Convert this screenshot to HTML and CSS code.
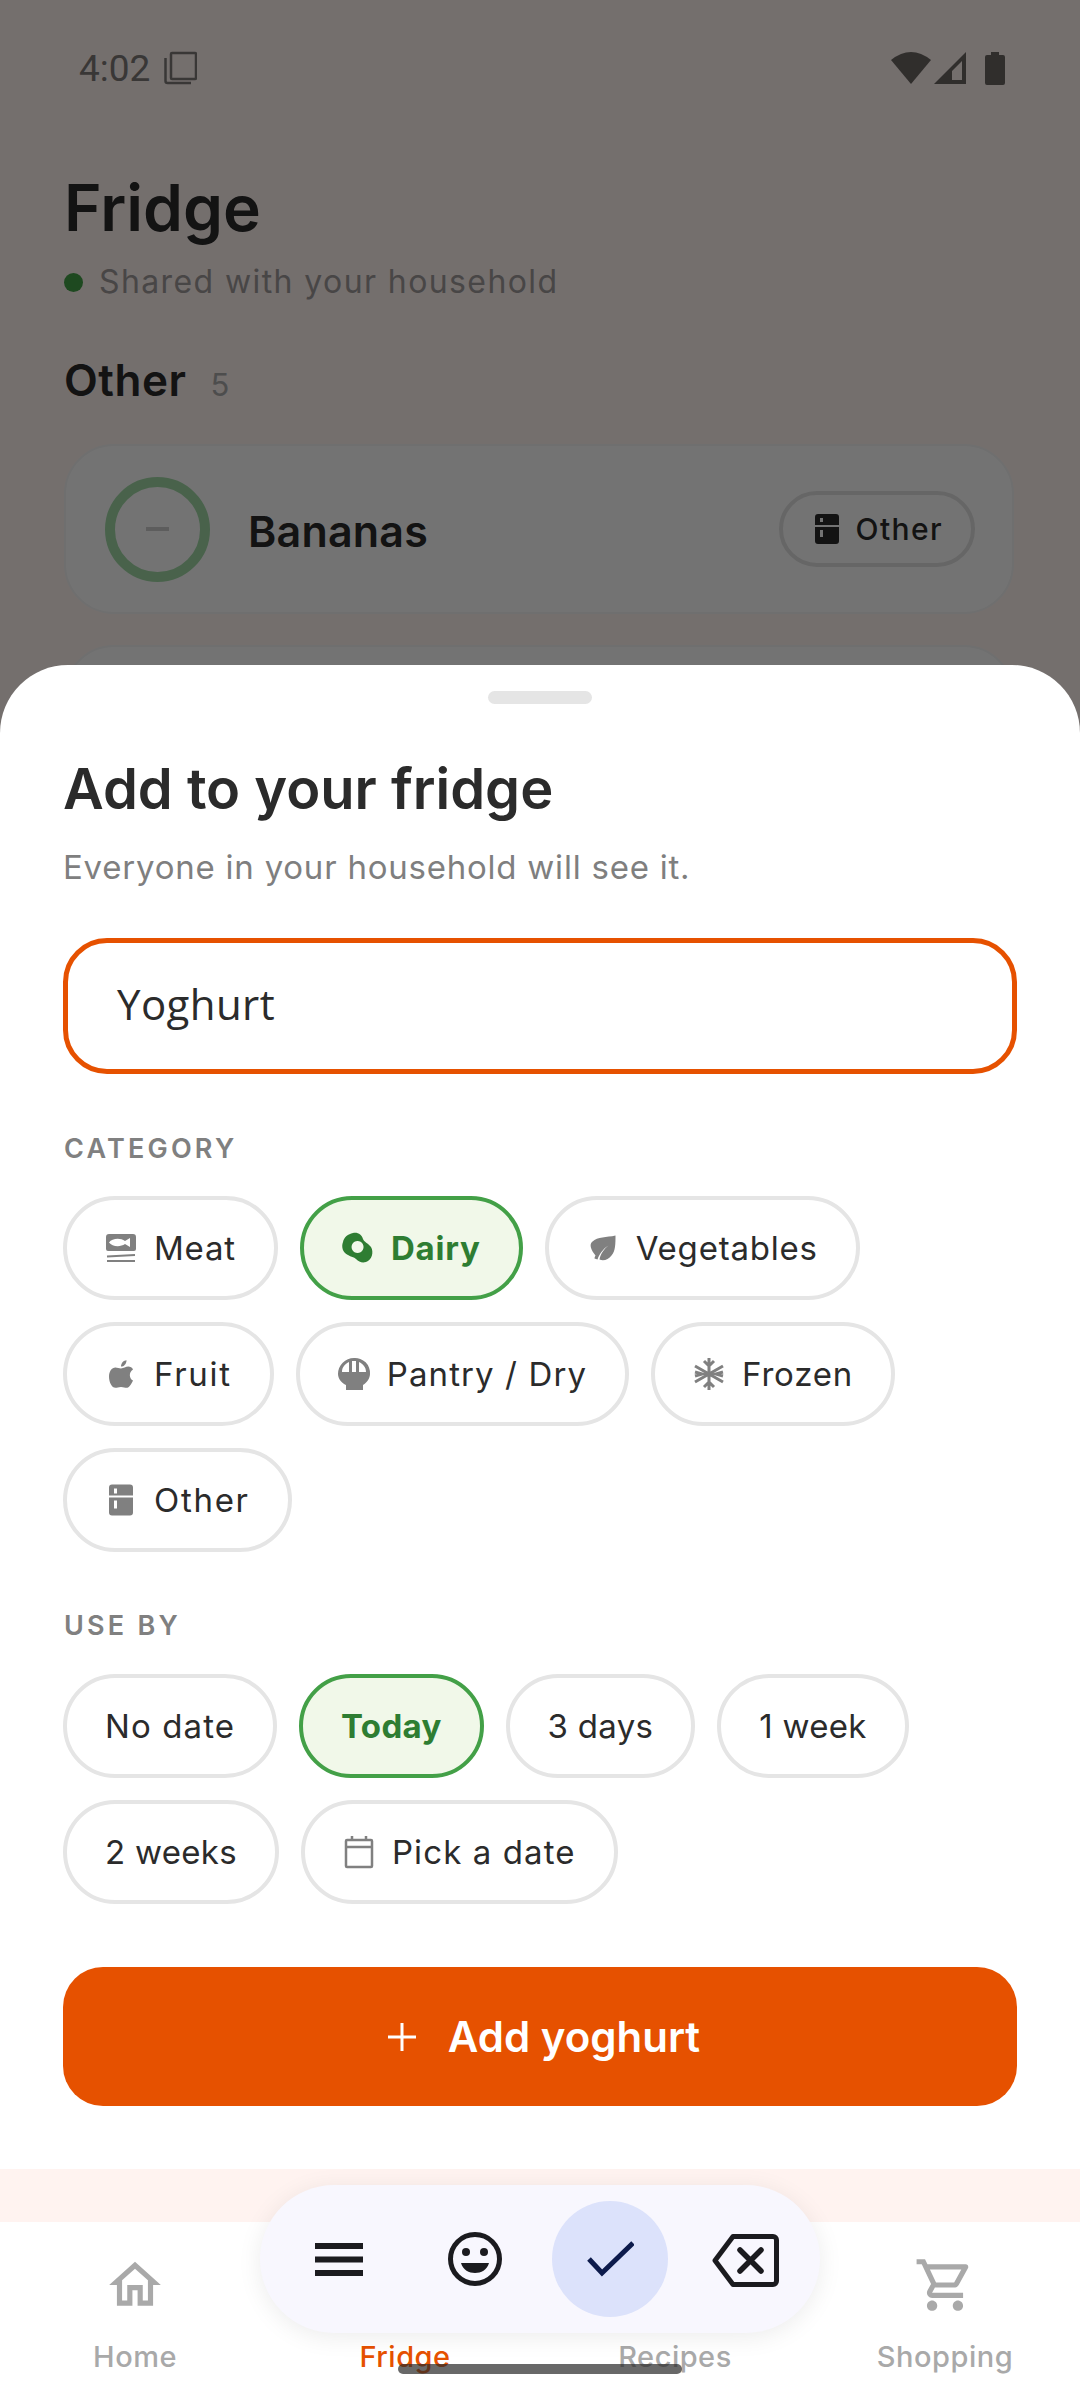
FILE: index.html
```html
<!DOCTYPE html>
<html lang="en">
<head>
  <meta charset="UTF-8">
  <meta name="viewport" content="width=device-width, initial-scale=1.0">
  <title>Fridge</title>
  <link rel="stylesheet" href="styles.css">
</head>
<body>
  <div class="screen">
    <div class="backdrop">
      <div class="status-bar">
        <div class="status-left">
          <span class="clock">4:02</span>
          <svg class="status-copy" viewBox="0 0 33 34"><path d="M8 2h23a1 1 0 0 1 1 1v24a1 1 0 0 1-1 1H8a1 1 0 0 1-1-1V3a1 1 0 0 1 1-1zM1.500 7v23a2 2 0 0 0 2 2H27" fill="none" stroke="currentColor" stroke-width="2.500"/></svg>
        </div>
        <div class="status-right">
          <svg class="status-wifi" viewBox="0 0 40 32"><path d="M20 32 0 8Q20-8 40 8z" fill="currentColor"/></svg>
          <svg class="status-signal" viewBox="0 0 32 32"><path d="M32 0v32H0zM28 9 18 19v9h10z" fill="currentColor" fill-rule="evenodd"/></svg>
          <svg class="status-battery" viewBox="0 0 20 33"><path d="M6 0h8v3h4a2 2 0 0 1 2 2v26a2 2 0 0 1-2 2H2a2 2 0 0 1-2-2V5a2 2 0 0 1 2-2h4z" fill="currentColor"/></svg>
        </div>
      </div>
      <h1 class="page-title">Fridge</h1>
      <div class="shared"><span class="shared-dot"></span>Shared with your household</div>
      <div class="section-head"><span class="section-name">Other</span><span class="section-count">5</span></div>
      <div class="item-card">
        <div class="ring"><span class="ring-dash"></span></div>
        <span class="item-name">Bananas</span>
        <span class="item-tag">
          <svg class="item-tag-icon" viewBox="0 0 24 30"><path d="M3 0h18a3 3 0 0 1 3 3v8H0V3a3 3 0 0 1 3-3zM0 13h24v14a3 3 0 0 1-3 3H3a3 3 0 0 1-3-3zM5 4v4h3V4zM5 16v7h3v-7z" fill="currentColor" fill-rule="evenodd"/></svg>
          Other
        </span>
      </div>
      <div class="item-card item-card-next"></div>
      <div class="scrim"></div>
    </div>

    <div class="sheet">
      <div class="handle"></div>
      <h2 class="sheet-title">Add to your fridge</h2>
      <p class="sheet-sub">Everyone in your household will see it.</p>
      <div class="name-input">Yoghurt</div>

      <div class="field-label">CATEGORY</div>
      <div class="chips">
        <span class="chip has-icon">
          <svg class="chip-icon" viewBox="0 0 36 36"><path d="M6 4h24a3 3 0 0 1 3 3v12a2 2 0 0 1-2 2H5a2 2 0 0 1-2-2V7a3 3 0 0 1 3-3zM6 12.500c3-4 11-5 16-1.500l5-3v9l-5-3c-5 3.500-13 2.500-16-1.500z" fill="currentColor" fill-rule="evenodd"/><path d="M4 26.500l28-1.500M4 31h28" stroke="currentColor" stroke-width="2" fill="none"/></svg>
          Meat
        </span>
        <span class="chip has-icon selected">
          <svg class="chip-icon" viewBox="-2 -2 36 36"><path d="M11 1c5-1 9 2 10 6 1 3 5 4 8 8 3 5 1 13-5 15-4 1-7 0-10-3-2-2-5-2-8-4C1 21-1 15 1 10 2 5 6 2 11 1zM15.500 9a6 6 0 1 0 .1 0z" fill="currentColor" fill-rule="evenodd"/></svg>
          Dairy
        </span>
        <span class="chip has-icon">
          <svg class="chip-icon" viewBox="-5.500 -5.500 36 36"><path d="M25 0c0 8 0 16-4 20-3 4-8 6-12 4 1-6 5-11 9-14-5 3-9 8-11 14l-3-1c0-1 0-1 1-3C1 15-2 9 2 6 7 1 16 2 25 0z" fill="currentColor"/></svg>
          Vegetables
        </span>
        <span class="chip has-icon spaced-more">
          <svg class="chip-icon" viewBox="-6.500 -4.500 39 39"><path d="M19 0c0 4-3 7-6 7 0-4 3-7 6-7zM13 9c3 0 5-2 8-2 2 0 4 1 5 3-5 3-4 10 0 12-2 4-4 8-7 8-2 0-3-1-6-1s-4 1-6 1C3 30 0 24 0 18 0 12 3 8 7 8c2 0 4 1 6 1z" fill="currentColor"/></svg>
          Fruit
        </span>
        <span class="chip has-icon spaced">
          <svg class="chip-icon" viewBox="-2 -2 36 36"><path d="M16 0a15 15 0 0 1 16 16c0 5-4 9-7 11v5H8v-5c-4-2-8-6-8-11A16 16 0 0 1 16 0zM11 4c-4 2-7 5-7 10h7zM14 3v11h4V3zM21 4v10h7c0-5-3-8-7-10z" fill="currentColor" fill-rule="evenodd"/></svg>
          Pantry / Dry
        </span>
        <span class="chip has-icon">
          <svg class="chip-icon" viewBox="-2 -2 36 36"><path d="M16 0v32M2 8l28 16M30 8 2 24M11 3l5 5 5-5M11 29l5-5 5 5M2 14l7 2-7 2M30 14l-7 2 7 2" fill="none" stroke="currentColor" stroke-width="3"/></svg>
          Frozen
        </span>
        <span class="chip has-icon spaced-more">
          <svg class="chip-icon" viewBox="-6 -2.500 36 36"><path d="M3 0h18a3 3 0 0 1 3 3v8H0V3a3 3 0 0 1 3-3zM0 13h24v15a3 3 0 0 1-3 3H3a3 3 0 0 1-3-3zM5 4v5h3V4zM5 16v8h3v-8z" fill="currentColor" fill-rule="evenodd"/></svg>
          Other
        </span>
      </div>

      <div class="field-label field-label-date">USE BY</div>
      <div class="chips">
        <span class="chip spaced">No date</span>
        <span class="chip selected tight">Today</span>
        <span class="chip tight">3 days</span>
        <span class="chip tight">1 week</span>
        <span class="chip tight">2 weeks</span>
        <span class="chip has-icon spaced">
          <svg class="chip-icon" viewBox="-3 0 36 36"><path d="M3 6h24a1 1 0 0 1 1 1v25a1 1 0 0 1-1 1H3a1 1 0 0 1-1-1V7a1 1 0 0 1 1-1zM2 13h26M8 2v4M22 2v4" fill="none" stroke="currentColor" stroke-width="2.500"/></svg>
          Pick a date
        </span>
      </div>

      <div class="add-button">
        <svg class="add-plus" viewBox="0 0 28 28"><path d="M14 0v28M0 14h28" stroke="currentColor" stroke-width="3"/></svg>
        Add yoghurt
      </div>
    </div>

    <div class="sheet-gap"></div>

    <div class="nav">
      <div class="nav-item">
        <svg class="nav-icon" viewBox="0 0 24 24"><path d="M12 5.690l5 4.500V18h-2v-6H9v6H7v-7.810l5-4.500M12 3 2 12h3v8h6v-6h2v6h6v-8h3L12 3z" fill="currentColor"/></svg>
        <span class="nav-label">Home</span>
      </div>
      <div class="nav-item active"><span class="nav-icon"></span><span class="nav-label">Fridge</span></div>
      <div class="nav-item"><span class="nav-icon"></span><span class="nav-label">Recipes</span></div>
      <div class="nav-item">
        <svg class="nav-icon" viewBox="0 0 24 24"><path d="M15.550 13c.75 0 1.410-.41 1.750-1.030l3.580-6.490c.37-.66-.11-1.480-.87-1.480H5.210l-.94-2H1v2h2l3.600 7.590-1.350 2.440C4.520 15.370 5.480 17 7 17h12v-2H7l1.100-2h7.450zM6.160 6h12.150l-2.760 5H8.530L6.160 6zM7 18c-1.100 0-1.990.9-1.990 2s.89 2 1.990 2 2-.9 2-2-.9-2-2-2zm10 0c-1.100 0-1.990.9-1.990 2s.89 2 1.990 2 2-.9 2-2-.9-2-2-2z" fill="currentColor"/></svg>
        <span class="nav-label">Shopping</span>
      </div>
    </div>

    <div class="kb-toolbar">
      <svg class="kb-menu" viewBox="0 0 48 33"><path d="M0 3h48M0 16.500h48M0 30h48" stroke="currentColor" stroke-width="6"/></svg>
      <svg class="kb-emoji" viewBox="0 0 54 54"><circle cx="27" cy="27" r="24.500" fill="none" stroke="currentColor" stroke-width="5"/><circle cx="18" cy="20" r="4" fill="currentColor"/><circle cx="36" cy="20" r="4" fill="currentColor"/><path d="M13 31h28c-2 7-8 10-14 10s-12-3-14-10z" fill="currentColor"/></svg>
      <span class="kb-check">
        <svg class="kb-check-icon" viewBox="0 0 48 36"><path d="M3 18l13 14L47 2" fill="none" stroke="currentColor" stroke-width="5"/></svg>
      </span>
      <svg class="kb-back" viewBox="0 0 67 53"><path d="M21 2.500h40a3.500 3.500 0 0 1 3.500 3.500v41a3.500 3.500 0 0 1-3.500 3.500H21L3 26.500z" fill="none" stroke="currentColor" stroke-width="5" stroke-linejoin="round"/><path d="M28 16l21 21M49 16 28 37" fill="none" stroke="currentColor" stroke-width="5.500" stroke-linecap="round"/></svg>
    </div>
    <div class="gesture-bar"></div>
  </div>
</body>
</html>
```

FILE: styles.css
```css
* {
  box-sizing: border-box;
}
body {
  margin: 0;
  font-family: "Inter", sans-serif;
  color: #2b2b2b;
}
.screen {
  position: relative;
  width: 1080px;
  height: 2400px;
  overflow: hidden;
  display: flex;
  flex-direction: column;
  background: #fff;
}

/* dimmed page behind the sheet */
.backdrop {
  position: relative;
  height: 735px;
  flex: none;
  padding: 0 66px 0 64px;
  background: #fff3f0;
  overflow: hidden;
}
.scrim {
  position: absolute;
  inset: 0;
  background: rgba(0, 0, 0, 0.545);
}
.status-bar {
  display: flex;
  justify-content: space-between;
  align-items: center;
  height: 36px;
  margin: 50px 9px 0 15px;
}
.status-left,
.status-right {
  display: flex;
  align-items: center;
}
.clock {
  font-family: "Roboto", sans-serif;
  font-size: 37px;
  color: #7d7a78;
}
.status-copy {
  width: 33px;
  height: 34px;
  margin-left: 14px;
  color: #7d7a78;
}
.status-wifi {
  width: 40px;
  height: 32px;
  color: #6a6662;
}
.status-signal {
  width: 32px;
  height: 32px;
  margin-left: 3px;
  color: #6a6662;
}
.status-battery {
  width: 20px;
  height: 33px;
  margin-left: 19px;
  color: #6a6662;
}
.page-title {
  margin: 86px 0 0;
  font-size: 64px;
  line-height: 72px;
  font-weight: 600;
}
.shared {
  display: flex;
  align-items: center;
  gap: 16px;
  margin-top: 18px;
  font-size: 32px;
  line-height: 40px;
  letter-spacing: 1.4px;
  color: #9f9b9b;
}
.shared-dot {
  width: 19px;
  height: 19px;
  border-radius: 50%;
  background: #43a047;
}
.section-head {
  display: flex;
  align-items: baseline;
  gap: 24px;
  margin-top: 53px;
}
.section-name {
  font-size: 44px;
  line-height: 50px;
  font-weight: 600;
  letter-spacing: 0.5px;
}
.section-count {
  font-size: 31px;
  color: #aaa;
}
.item-card {
  display: flex;
  align-items: center;
  height: 170px;
  margin-top: 39px;
  padding: 0 37px 0 39px;
  border: 2px solid #f4f4f4;
  border-radius: 50px;
  background: #fdfdfd;
}
.item-card-next {
  margin-top: 31px;
}
.ring {
  display: flex;
  align-items: center;
  justify-content: center;
  width: 105px;
  height: 105px;
  border: 10px solid #a0d8a6;
  border-radius: 50%;
}
.ring-dash {
  width: 23px;
  height: 4px;
  background: #ccc;
}
.item-name {
  flex: 1;
  margin-left: 38px;
  padding-top: 4px;
  font-size: 43px;
  font-weight: 600;
  letter-spacing: 0.2px;
}
.item-tag {
  display: flex;
  align-items: center;
  gap: 16px;
  height: 76px;
  padding: 0 28px 0 32px;
  border: 4px solid #e0e0e0;
  border-radius: 38px;
  font-size: 30px;
  font-weight: 500;
  letter-spacing: 1.4px;
}
.item-tag-icon {
  width: 24px;
  height: 30px;
}

/* bottom sheet */
.sheet {
  position: relative;
  flex: none;
  height: 1504px;
  margin-top: -70px;
  padding: 26px 63px 0;
  border-radius: 68px 68px 0 0;
  background: #fff;
}
.handle {
  width: 104px;
  height: 13px;
  margin: 0 auto;
  border-radius: 7px;
  background: #e5e5e5;
}
.sheet-title {
  margin: 50px 0 0;
  font-size: 56px;
  line-height: 70px;
  font-weight: 600;
}
.sheet-sub {
  margin: 21px 0 0;
  font-size: 33px;
  line-height: 44px;
  letter-spacing: 0.77px;
  color: #7f7f7f;
}
.name-input {
  display: flex;
  align-items: center;
  height: 136px;
  margin-top: 49px;
  padding: 0 49px 5px;
  border: 5px solid #e65100;
  border-radius: 44px;
  font-family: "Open Sans", sans-serif;
  font-size: 42px;
  letter-spacing: 0.4px;
}
.field-label {
  margin-top: 59px;
  padding-left: 1px;
  font-size: 27px;
  line-height: 32px;
  font-weight: 600;
  letter-spacing: 3.2px;
  color: #808080;
}
.field-label-date {
  margin-top: 58px;
}
.chips {
  display: flex;
  flex-wrap: wrap;
  gap: 22px;
  margin-top: 31px;
}
.field-label-date + .chips {
  margin-top: 32px;
}
.chip {
  display: flex;
  align-items: center;
  height: 104px;
  padding: 0 38px;
  border: 4px solid #e5e5e5;
  border-radius: 52px;
  font-size: 33px;
  letter-spacing: 0.8px;
  white-space: nowrap;
}
.chip.tight {
  letter-spacing: 0.3px;
}
.chip.spaced {
  letter-spacing: 1.1px;
}
.chip.spaced-more {
  letter-spacing: 1.7px;
}
.chip.has-icon {
  gap: 15px;
  padding-left: 36px;
}
.chip.selected {
  border-color: #43a047;
  background: #f1f8e9;
  color: #2e7d32;
  font-weight: 700;
}
.chip-icon {
  width: 36px;
  height: 36px;
  color: #808080;
}
.chip.selected .chip-icon {
  color: #2e7d32;
}
.add-button {
  display: flex;
  align-items: center;
  justify-content: center;
  gap: 32px;
  height: 139px;
  margin-top: 63px;
  padding-left: 8px;
  border-radius: 40px;
  background: #e65100;
  color: #fff;
  font-size: 42px;
  font-weight: 600;
}
.add-plus {
  width: 28px;
  height: 28px;
}
.sheet-gap {
  flex: none;
  height: 53px;
  background: #fff3f0;
}

/* bottom navigation */
.nav {
  flex: 1;
  display: flex;
  background: #fff;
}
.nav-item {
  flex: 1;
  display: flex;
  flex-direction: column;
  align-items: center;
  padding-top: 32px;
  color: #a9a9a9;
}
.nav-item.active {
  color: #e65100;
}
.nav-icon {
  width: 62px;
  height: 62px;
}
.nav-label {
  margin-top: 23px;
  font-size: 29px;
  line-height: 36px;
  font-weight: 500;
  letter-spacing: 0.5px;
}

/* keyboard suggestion strip, floats over the nav */
.kb-toolbar {
  position: absolute;
  left: 260px;
  top: 2185px;
  display: grid;
  grid-template-columns: repeat(4, 135.5px);
  align-items: center;
  justify-items: center;
  width: 560px;
  height: 148px;
  padding-left: 11.5px;
  border-radius: 74px;
  background: #f8f7fe;
  box-shadow: 0 4px 24px rgba(0, 0, 0, 0.08);
  color: #1b1b1f;
}
.kb-menu {
  width: 48px;
  height: 33px;
}
.kb-emoji {
  width: 54px;
  height: 54px;
}
.kb-check {
  display: flex;
  align-items: center;
  justify-content: center;
  width: 116px;
  height: 116px;
  border-radius: 50%;
  background: #dce2fb;
  color: #0d1b4c;
}
.kb-check-icon {
  width: 48px;
  height: 36px;
}
.kb-back {
  width: 67px;
  height: 53px;
  margin-top: 3px;
}
.gesture-bar {
  position: absolute;
  left: 398px;
  top: 2364px;
  width: 284px;
  height: 10px;
  border-radius: 5px;
  background: rgba(40, 40, 40, 0.7);
}
```
